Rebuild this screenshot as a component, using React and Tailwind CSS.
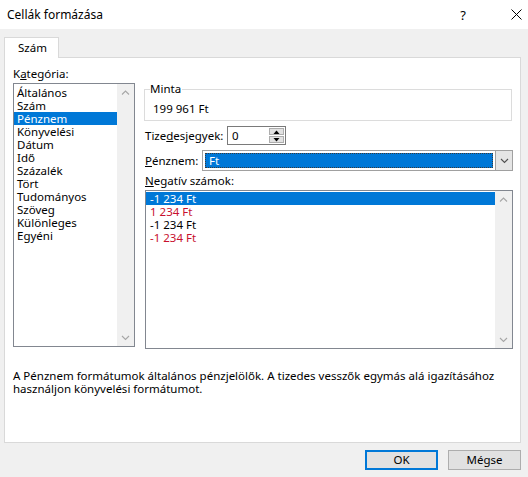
import React from "react";

const categories = [
  "Általános",
  "Szám",
  "Pénznem",
  "Könyvelési",
  "Dátum",
  "Idő",
  "Százalék",
  "Tört",
  "Tudományos",
  "Szöveg",
  "Különleges",
  "Egyéni",
];

const negatives = [
  { text: "-1 234 Ft", red: false, selected: true },
  { text: "1 234 Ft", red: true },
  { text: "-1 234 Ft", red: false },
  { text: "-1 234 Ft", red: true },
];

function Chevron({ dir = "down", color = "#a6a6a6" }) {
  const d = dir === "down" ? "M1 1 L4.5 4.5 L8 1" : "M1 4.5 L4.5 1 L8 4.5";
  return (
    <svg width="9" height="6" viewBox="0 0 9 6">
      <path d={d} stroke={color} strokeWidth="1.1" fill="none" />
    </svg>
  );
}

function Scrollbar() {
  return (
    <div className="w-[17px] h-full bg-[#f0f0f0] flex flex-col justify-between">
      <div className="h-[17px] flex items-center justify-center">
        <Chevron dir="up" />
      </div>
      <div className="h-[17px] flex items-center justify-center">
        <Chevron dir="down" />
      </div>
    </div>
  );
}

function Triangle({ up }) {
  return (
    <svg width="7" height="4" viewBox="0 0 7 4">
      <path d={up ? "M0.5 4 L3.5 0.5 L6.5 4 Z" : "M0.5 0 L3.5 3.5 L6.5 0 Z"} fill="#000" />
    </svg>
  );
}

export default function App() {
  return (
    <div className="w-[528px] h-[477px] bg-[#f0f0f0] flex flex-col font-['Noto_Sans',sans-serif] text-[11.5px] text-black leading-[13px] overflow-hidden">
      {/* Title bar */}
      <div className="h-[29px] bg-white flex items-center pl-[7px] pr-[6px]">
        <span className="flex-1 text-[12px] leading-[16px]">Cellák formázása</span>
        <span className="text-[13px] mr-[45px] leading-[16px]">?</span>
        <svg width="11" height="11" viewBox="0 0 11 11">
          <path d="M0.5 0.5 L10.5 10.5 M10.5 0.5 L0.5 10.5" stroke="#000" strokeWidth="1" />
        </svg>
      </div>

      {/* Tabs */}
      <div className="pt-[8px] pl-[4px] flex">
        <div className="w-[55px] h-[21px] bg-white border border-b-0 border-[#d9d9d9] flex items-center pl-[13px] leading-[16px] relative z-10">
          Szám
        </div>
      </div>

      {/* Panel */}
      <div className="ml-[4px] -mt-px w-[517px] h-[386px] bg-white border border-[#d9d9d9] flex flex-col">
        <div className="flex items-start pt-[8px] pl-[8px]">
          {/* Category column */}
          <div className="w-[122px] flex flex-col">
            <div className="leading-[16px]">
              K<span className="underline">a</span>tegória:
            </div>
            <div className="mt-[1px] h-[264px] border border-[#828790] flex">
              <div className="flex-1 pt-[2px]">
                {categories.map((c) =>
                  c === "Pénznem" ? (
                    <div key={c} className="h-[13px] bg-[#0078d7] text-white pl-[3px]">
                      {c}
                    </div>
                  ) : (
                    <div key={c} className="h-[13px] pl-[3px]">
                      {c}
                    </div>
                  )
                )}
              </div>
              <Scrollbar />
            </div>
          </div>

          {/* Options column */}
          <div className="ml-[9px] w-[369px] mt-[15px] flex flex-col">
            <fieldset className="w-[368px] border border-[#dcdcdc] pl-[5px]">
              <legend className="px-0 pr-[1px] leading-[16px]">Minta</legend>
              <div className="pl-[3px] pt-[4px] pb-[3px] leading-[16px]">199 961 Ft</div>
            </fieldset>

            <div className="mt-[5px] flex items-center h-[19px] pl-[1px]">
              <div className="w-[82px] leading-[16px]">
                Tize<span className="underline">d</span>esjegyek:
              </div>
              <div className="w-[59px] h-[19px] border border-[#7a7a7a] flex">
                <div className="flex-1 pl-[4px] flex items-center leading-[16px]">0</div>
                <div className="w-[17px] h-full flex flex-col p-px gap-px">
                  <div className="flex-1 bg-[#e1e1e1] border border-[#adadad] flex items-center justify-center">
                    <Triangle up />
                  </div>
                  <div className="flex-1 bg-[#e1e1e1] border border-[#adadad] flex items-center justify-center">
                    <Triangle />
                  </div>
                </div>
              </div>
            </div>

            <div className="mt-[5px] flex items-center h-[21px] pl-[1px]">
              <div className="w-[57px] leading-[16px]">
                <span className="underline">P</span>énznem:
              </div>
              <div className="w-[311px] h-[21px] border border-[#a0a0a0] flex">
                <div className="flex-1 p-[2px] flex">
                  <div className="flex-1 bg-[#0078d7] border border-dotted border-[#3a3a3a] text-white pl-[3px] flex items-center leading-[16px]">
                    Ft
                  </div>
                </div>
                <div className="w-[17px] h-full bg-[#e5e5e5] border-l border-[#a0a0a0] flex items-center justify-center">
                  <Chevron dir="down" color="#505050" />
                </div>
              </div>
            </div>

            <div className="mt-[2px] pl-[1px] leading-[16px]">
              <span className="underline">N</span>egatív számok:
            </div>

            <div className="mt-[1px] ml-[1px] w-[368px] h-[159px] border border-[#828790] flex">
              <div className="flex-1 pt-[1px]">
                {negatives.map((n, i) => (
                  <div
                    key={i}
                    className={
                      n.selected
                        ? "h-[13px] bg-[#0078d7] text-white pl-[4px]"
                        : n.red
                        ? "h-[13px] text-[#c8102e] pl-[4px]"
                        : "h-[13px] pl-[4px]"
                    }
                  >
                    {n.text}
                  </div>
                ))}
              </div>
              <Scrollbar />
            </div>
          </div>
        </div>

        {/* Description */}
        <div className="mt-[20px] pl-[8px] whitespace-nowrap">
          A Pénznem formátumok általános pénzjelölők. A tizedes vesszők egymás alá igazításához
          <br />
          használjon könyvelési formátumot.
        </div>
      </div>

      {/* Buttons */}
      <div className="mt-[7px] pr-[7px] flex justify-end gap-[10px]">
        <button className="w-[73px] h-[20px] bg-[#e1e1e1] border-2 border-[#0078d7] flex items-center justify-center leading-[16px]">
          OK
        </button>
        <button className="w-[73px] h-[20px] bg-[#e1e1e1] border border-[#adadad] flex items-center justify-center leading-[16px]">
          Mégse
        </button>
      </div>
    </div>
  );
}
